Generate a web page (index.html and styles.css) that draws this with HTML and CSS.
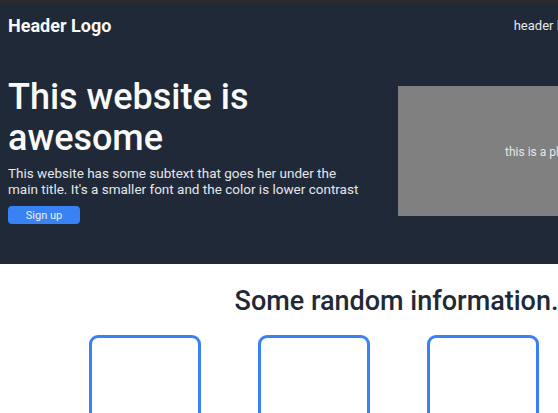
FILE: index.html
```html
<!DOCTYPE html>
<html lang="en">
<head>
<meta charset="utf-8">
<title>Landing page</title>
<link rel="stylesheet" href="styles.css">
</head>
<body>
<div class="page">
  <div class="topbar"></div>
  <div class="dark">
    <header class="header">
      <div class="logo">Header Logo</div>
      <nav class="nav">
        <a href="#">header link one</a>
        <a href="#">header link two</a>
        <a href="#">header link three</a>
      </nav>
    </header>
    <section class="hero">
      <div class="hero-text">
        <h1 class="hero-title">This website is awesome</h1>
        <p class="hero-sub">This website has some subtext that goes her under the main title. It's a smaller font and the color is lower contrast</p>
        <button class="btn">Sign up</button>
      </div>
      <div class="hero-img">this is a placeholder for an image</div>
    </section>
  </div>
  <section class="info">
    <h2 class="info-title">Some random information.</h2>
    <div class="cards">
      <div class="card"></div>
      <div class="card"></div>
      <div class="card"></div>
      <div class="card"></div>
    </div>
  </section>
</div>
</body>
</html>
```
FILE: styles.css
```css
html, body {
  margin: 0;
  padding: 0;
  background: #ffffff;
  font-family: Roboto, "Liberation Sans", sans-serif;
}
.page {
  width: 793px;
}
.topbar {
  height: 4px;
  background: #2b2b2b;
}
.dark {
  background: #1f2937;
}
.header {
  display: flex;
  justify-content: space-between;
  align-items: center;
  padding: 11px 0 11px 8px;
}
.logo {
  color: #f9faf8;
  font-size: 18px;
  font-weight: 700;
  line-height: 21px;
}
.nav {
  display: flex;
  gap: 4px;
}
.nav a {
  color: #e5e7eb;
  font-size: 13px;
  text-decoration: none;
}
.hero {
  display: flex;
  align-items: center;
  gap: 30px;
  padding: 30px 8px 40px;
}
.hero-text {
  width: 360px;
  flex: none;
}
.hero-title {
  margin: 0;
  color: #f9faf8;
  font-size: 36px;
  line-height: 41px;
  font-weight: 500;
}
.hero-sub {
  margin: 6px 0 9px;
  color: #e5e7eb;
  font-size: 13.5px;
  line-height: 16px;
}
.btn {
  display: block;
  width: 72px;
  height: 18px;
  padding: 0;
  border: none;
  border-radius: 4px;
  background: #3882f6;
  color: #eef0f4;
  font-family: Roboto, "Liberation Sans", sans-serif;
  font-size: 11px;
}
.hero-img {
  flex: 1;
  height: 130px;
  background: #808080;
  color: #e5e7eb;
  font-size: 12px;
  display: flex;
  align-items: center;
  justify-content: center;
  padding-left: 4px;
  padding-top: 2px;
  box-sizing: border-box;
}
.info {
  padding-top: 21px;
}
.info-title {
  margin: 0;
  text-align: center;
  color: #1f2937;
  font-size: 27px;
  font-weight: 500;
  line-height: 32px;
}
.cards {
  display: flex;
  justify-content: center;
  gap: 57px;
  margin-top: 18px;
  padding-left: 4px;
}
.card {
  width: 106px;
  height: 106px;
  border: 3px solid #3882f6;
  border-radius: 9px;
}
```
